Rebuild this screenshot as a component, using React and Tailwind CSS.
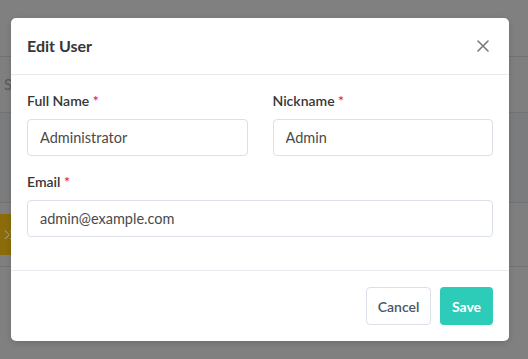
import React from 'react';

function Field({ label, value }) {
  return (
    <div className="flex flex-col">
      <label className="text-[14px] leading-5 font-semibold text-[#363636]">
        {label} <span className="text-[#e0245e]">*</span>
      </label>
      <input
        readOnly
        value={value}
        className="mt-2 h-[37px] w-full rounded-[4px] border border-[#dbe0e8] bg-white px-3 text-[14.5px] text-[#4a4a4a] outline-none"
      />
    </div>
  );
}

export default function App() {
  return (
    <div className="relative h-[359px] w-[528px] overflow-hidden bg-[#808080] font-['Lato',sans-serif]">
      {/* page behind the overlay */}
      <div className="flex flex-col pt-[56px]">
        <div className="h-px bg-[#737373]" />
        <div className="flex h-[55px] items-center bg-[#7f7f7f] pl-1 text-[15px] text-[#5a5a5a]">St</div>
        <div className="h-px bg-[#737373]" />
        <div className="h-[89px] bg-[#7b7c7e]" />
        <div className="h-px bg-[#737373]" />
        <div className="flex h-[63px] items-center bg-[#7f7f7f]">
          <div className="flex h-[41px] w-[40px] items-center justify-center rounded-[4px] bg-[#8a6c0a] -ml-[20px]">
            <span className="ml-[16px] text-[12px] text-[#b8b8b8]">⤨</span>
          </div>
        </div>
        <div className="h-px bg-[#737373]" />
      </div>

      {/* modal */}
      <div className="absolute left-[11px] top-[18px] w-[498px] overflow-hidden rounded-[5px] bg-white shadow-[0_2px_6px_rgba(0,0,0,0.15)]">
        <div className="flex h-[57px] items-center justify-between border-b border-[#e8ebf0] px-4">
          <h2 className="text-[16px] font-bold text-[#363636]">Edit User</h2>
          <button className="mr-[4px] text-[#7a7a7a]">
            <svg width="12" height="12" viewBox="0 0 12 12" fill="none" stroke="currentColor" strokeWidth="1.6" strokeLinecap="round">
              <path d="M1 1l10 10M11 1L1 11" />
            </svg>
          </button>
        </div>

        <div className="px-4 pt-[16px] pb-[33px]">
          <div className="grid grid-cols-2 gap-x-[25px]">
            <Field label="Full Name" value="Administrator" />
            <Field label="Nickname" value="Admin" />
          </div>
          <div className="mt-[16px]">
            <Field label="Email" value="admin@example.com" />
          </div>
        </div>

        <div className="flex justify-end gap-[9px] border-t border-[#e8ebf0] p-4">
          <button className="h-[38px] w-[65px] rounded-[4px] border border-[#dbe0e8] bg-white text-[14px] font-semibold text-[#4a5568]">
            Cancel
          </button>
          <button className="h-[38px] w-[53px] rounded-[4px] bg-[#2dccb9] text-[14px] font-bold text-white">
            Save
          </button>
        </div>
      </div>
    </div>
  );
}
